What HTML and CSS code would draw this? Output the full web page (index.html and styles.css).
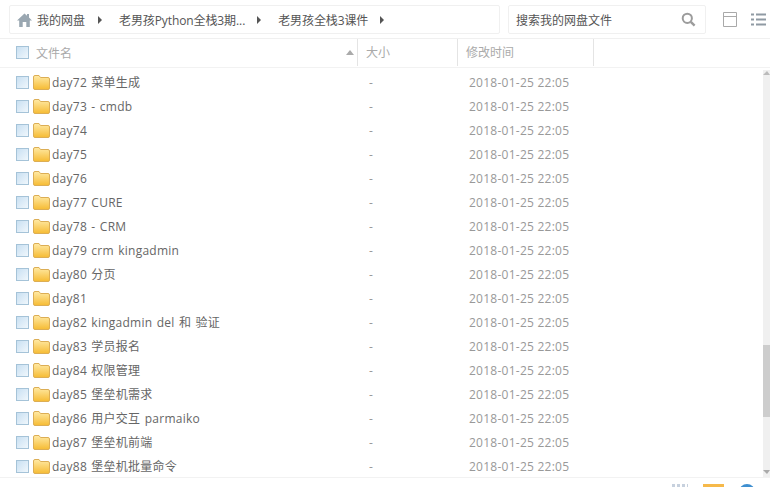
FILE: index.html
```html
<!DOCTYPE html>
<html lang="zh-CN">
<head>
    <meta charset="UTF-8">
    <title>我的网盘</title>
    <link rel="stylesheet" href="styles.css">
</head>
<body>

<div class="toolbar">
    <div class="crumbs">
        <svg class="home-icon" width="15" height="14" viewBox="0 0 15 14"><path d="M7.5 0.5 L10 2.8 V1 H12 V4.6 L15 7.5 H12.8 V14 H9.3 V9 H5.7 V14 H2.2 V7.5 H0 Z" fill="#9aa7b1"/></svg>
        <span class="crumb-home">我的网盘</span>
        <span class="arrow"></span>
        <span class="crumb">老男孩Python全栈3期...</span>
        <span class="arrow"></span>
        <span class="crumb">老男孩全栈3课件</span>
        <span class="arrow"></span>
    </div>
    <div class="search">
        <span>搜索我的网盘文件</span>
        <svg width="15" height="15" viewBox="0 0 15 15"><circle cx="6.3" cy="6.3" r="4.6" fill="none" stroke="#9c9c9c" stroke-width="2"/><path d="M9.8 9.8 L13.6 13.6" stroke="#9c9c9c" stroke-width="2.4"/></svg>
    </div>
    <svg class="view-icon" width="14" height="15" viewBox="0 0 14 15"><path d="M0.5 0.5 H13.5 V14.5 H0.5 Z M0.5 4.5 H13.5" fill="none" stroke="#a9a9a9"/></svg>
    <svg class="list-icon" width="15" height="13" viewBox="0 0 15 13"><path d="M0 1.5 H3 M5 1.5 H15 M0 6.5 H3 M5 6.5 H15 M0 11.5 H3 M5 11.5 H15" stroke="#8f9aa3" stroke-width="2"/></svg>
</div>

<div class="head">
    <div class="col-name">
        <span class="check"></span>
        <span class="head-label">文件名</span>
        <span class="sort"></span>
    </div>
    <div class="col-size head-label">大小</div>
    <div class="col-time head-label">修改时间</div>
</div>

<div class="list-wrap">
    <div class="list" id="list"></div>
    <div class="scrollbar">
        <span class="scroll-up"></span>
        <span class="scroll-thumb"></span>
        <span class="scroll-down"></span>
    </div>
</div>

<div class="footer">
    <svg width="16" height="4" viewBox="0 0 16 4"><path d="M0 1 H16 M0 3 H16" stroke="#8fa3bd" stroke-dasharray="3 2"/></svg>
    <span class="foot-folder"></span>
    <span class="foot-circle"></span>
</div>

<script>
    const names = [
        'day72 菜单生成', 'day73 - cmdb', 'day74', 'day75', 'day76', 'day77 CURE',
        'day78 - CRM', 'day79 crm kingadmin', 'day80 分页', 'day81',
        'day82 kingadmin del 和 验证', 'day83 学员报名', 'day84 权限管理',
        'day85 堡垒机需求', 'day86 用户交互 parmaiko', 'day87 堡垒机前端', 'day88 堡垒机批量命令'
    ];
    const folder = '<svg class="folder" width="17" height="15" viewBox="0 0 17 15">' +
        '<defs><linearGradient id="fg" x1="0" y1="0" x2="0" y2="1"><stop offset="0" stop-color="#ffeaa6"/><stop offset="1" stop-color="#f6bb33"/></linearGradient></defs>' +
        '<path d="M0.5 2 Q0.5 0.5 2 0.5 H6 L7.5 2.5 H15 Q16.5 2.5 16.5 4 V13 Q16.5 14.5 15 14.5 H2 Q0.5 14.5 0.5 13 Z" fill="url(#fg)" stroke="#dcae55"/></svg>';

    document.getElementById('list').innerHTML = names.map(name =>
        '<div class="row"><div class="col-name"><span class="check"></span>' + folder +
        '<span class="name">' + name + '</span></div>' +
        '<div class="col-size">-</div><div class="col-time">2018-01-25 22:05</div></div>'
    ).join('');
</script>
</body>
</html>
```

FILE: styles.css
```css
body {
    margin: 0;
    height: 487px;
    overflow: hidden;
    background-color: #fff;
    color: #666;
    font-family: 'Open Sans', 'Noto Sans CJK SC', sans-serif;
    font-size: 12px;
}
.toolbar {
    display: flex;
    align-items: center;
    height: 39px;
    box-sizing: border-box;
    padding: 5px 4px 4px 9px;
    border-bottom: 1px solid #f0f0f0;
}
.crumbs {
    display: flex;
    align-items: center;
    width: 491px;
    height: 29px;
    box-sizing: border-box;
    padding-left: 7px;
    border: 1px solid #f0f0f0;
    border-radius: 2px;
    color: #555;
}
.home-icon {
    margin-right: 5px;
}
.crumb-home {
    margin-right: 13px;
}
.crumb {
    margin: 0 12px 0 17px;
    letter-spacing: -0.1px;
}
.arrow {
    width: 0;
    height: 0;
    border-left: 4px solid #555;
    border-top: 4px solid transparent;
    border-bottom: 4px solid transparent;
}
.search {
    display: flex;
    align-items: center;
    justify-content: space-between;
    width: 198px;
    height: 29px;
    box-sizing: border-box;
    margin-left: 8px;
    padding: 0 9px 0 7px;
    border: 1px solid #f0f0f0;
    border-radius: 2px;
    color: #555;
}
.view-icon {
    margin-left: 17px;
}
.list-icon {
    margin-left: 14px;
}
.head {
    display: flex;
    height: 28px;
    border-bottom: 1px solid #f2f2f2;
    color: #aaa;
}
.head .col-name, .head .col-size, .head .col-time {
    border-right: 1px solid #e4e4e4;
    box-sizing: border-box;
    height: 27px;
}
.head .col-size, .head .col-time {
    line-height: 27px;
}
.head-label {
    color: #aaa;
}
.head .col-name .head-label {
    margin-left: 7px;
}
.sort {
    margin-left: auto;
    margin-right: 3px;
    width: 0;
    height: 0;
    border-left: 4px solid transparent;
    border-right: 4px solid transparent;
    border-bottom: 5px solid #aaa;
}
.col-name {
    display: flex;
    align-items: center;
    width: 358px;
    box-sizing: border-box;
    padding-left: 16px;
}
.col-size {
    width: 100px;
    box-sizing: border-box;
    padding-left: 8px;
}
.col-time {
    width: 136px;
    box-sizing: border-box;
    padding-left: 8px;
}
.check {
    flex: none;
    width: 11px;
    height: 11px;
    border: 1px solid #a5c3d8;
    background: linear-gradient(135deg, #c9e0f2, #f0f7fc);
}
.list-wrap {
    display: flex;
    height: 407px;
    margin-top: 2px;
    border-bottom: 1px solid #f2f2f2;
}
.list {
    flex: 1;
}
.row {
    display: flex;
    align-items: center;
    height: 24px;
    font-size: 12px;
    letter-spacing: 0.25px;
    color: #666;
}
.row .col-size {
    padding-left: 11px;
    color: #999;
}
.row .col-time {
    padding-left: 11px;
    color: #999;
}
.folder {
    margin: 1px 0 0 4px;
}
.name {
    margin-left: 2px;
    white-space: nowrap;
    word-spacing: 1px;
}
.scrollbar {
    width: 7px;
    background-color: #f0f0f0;
    position: relative;
}
.scroll-thumb {
    position: absolute;
    top: 275px;
    left: 0;
    width: 7px;
    height: 72px;
    background-color: #cdcdcd;
}
.scroll-up, .scroll-down {
    position: absolute;
    left: 0;
    width: 0;
    height: 0;
    border-left: 4px solid transparent;
    border-right: 3px solid transparent;
}
.scroll-up {
    top: 1px;
    border-bottom: 4px solid #bbb;
}
.scroll-down {
    bottom: 3px;
    border-top: 4px solid #aaa;
}
.footer {
    display: flex;
    align-items: flex-start;
    gap: 15px;
    padding: 6px 0 0 672px;
}
.foot-folder {
    width: 21px;
    height: 6px;
    background-color: #f6b94a;
}
.foot-circle {
    width: 16px;
    height: 16px;
    border-radius: 50%;
    background-color: #3f8fd0;
}
```
